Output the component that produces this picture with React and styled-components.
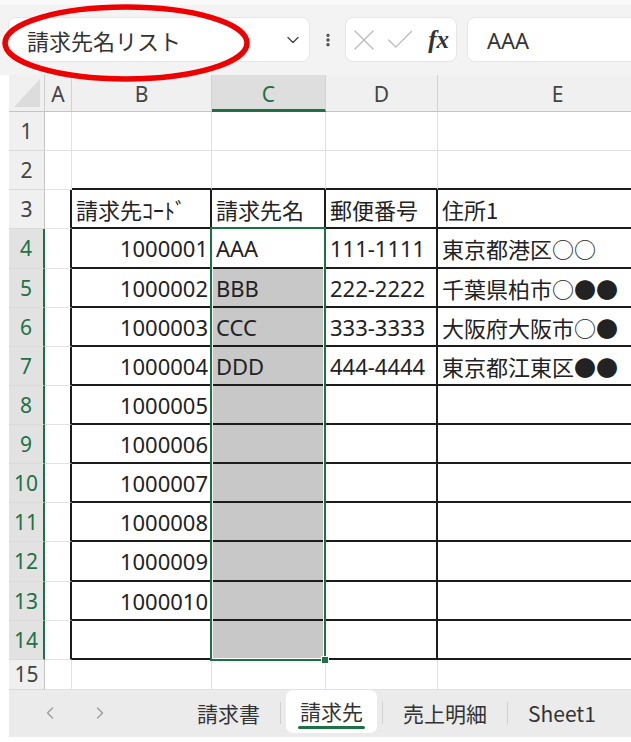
import styled, { createGlobalStyle } from "styled-components";
import {
  ChevronDown,
  EllipsisVertical,
  X,
  Check,
  ChevronLeft,
  ChevronRight,
} from "lucide-react";

const GlobalStyle = createGlobalStyle`
  html, body {
    margin: 0;
    padding: 0;
    background: #fff;
  }
  body {
    font-family: "Noto Sans", "Noto Sans CJK JP", sans-serif;
    overflow: hidden;
  }
`;

const GREEN = "#1e7145";

const Page = styled.div`
  position: relative;
  width: 631px;
  height: 742px;
  overflow: hidden;
`;

/* formula bar */
const Toolbar = styled.div`
  height: 75px;
  box-sizing: border-box;
  padding: 4px 0 0 8px;
  background: linear-gradient(#fafafa 0, #fafafa 5px, #f3f3f3 5px);
  display: flex;
  align-items: center;
  overflow: hidden;
`;

const NameBox = styled.div`
  flex: 0 0 302px;
  height: 45px;
  box-sizing: border-box;
  background: #fff;
  border: 1px solid #e6e6e6;
  border-radius: 8px;
  display: flex;
  align-items: center;
  justify-content: space-between;
  padding: 0 6px 0 18px;
  font-family: "Noto Sans CJK JP", sans-serif;
  font-size: 22px;
  color: #333;
`;

const Dots = styled.div`
  flex: 0 0 35px;
  display: flex;
  justify-content: center;
  color: #444;
`;

const FxButtons = styled.div`
  flex: 0 0 112px;
  height: 45px;
  box-sizing: border-box;
  background: #fff;
  border: 1px solid #e6e6e6;
  border-radius: 8px;
  display: flex;
  align-items: center;
  padding: 0 7px 0 0;
  color: #b8b8b8;
  svg + svg {
    margin-left: 1px;
  }
`;

const FxLabel = styled.span`
  margin-left: auto;
  font-family: "Liberation Serif", serif;
  font-style: italic;
  font-weight: bold;
  font-size: 25px;
  color: #333;
`;

const FormulaInput = styled.div`
  flex: 0 0 200px;
  height: 45px;
  margin-left: 10px;
  box-sizing: border-box;
  background: #fff;
  border: 1px solid #e6e6e6;
  border-radius: 8px;
  display: flex;
  align-items: center;
  padding-left: 19px;
  font-size: 22px;
  color: #333;
`;

/* sheet grid */
const Grid = styled.div`
  margin-left: 9px;
  display: grid;
  grid-template-columns: 36px 27px 140px 114px 112px 240px;
  grid-template-rows: 37px repeat(14, 39.14px) 30px;
  width: 622px;
  overflow: hidden;
`;

const Corner = styled.div`
  grid-row: 1;
  grid-column: 1;
  background: #f0f0f0;
  border-right: 1px solid #cfcfcf;
  border-bottom: 1px solid #c4c4c4;
  position: relative;
  &::after {
    content: "";
    position: absolute;
    right: 4px;
    bottom: 4px;
    width: 26px;
    height: 28px;
    background: #dcdcdc;
    clip-path: polygon(100% 0, 100% 100%, 0 100%);
  }
`;

const ColHead = styled.div`
  grid-row: 1;
  grid-column: ${(p) => p.$col};
  box-sizing: border-box;
  background: ${(p) => (p.$active ? "#dedede" : "#f0f0f0")};
  border-right: 1px solid #d2d2d2;
  border-bottom: ${(p) => (p.$active ? `3px solid ${GREEN}` : "1px solid #c4c4c4")};
  display: flex;
  align-items: center;
  justify-content: center;
  padding-top: ${(p) => (p.$active ? "4px" : "2px")};
  font-size: 21px;
  color: ${(p) => (p.$active ? GREEN : "#444")};
`;

const RowHead = styled.div`
  grid-row: ${(p) => p.$row};
  grid-column: 1;
  box-sizing: border-box;
  background: ${(p) => (p.$active ? "#e2e2e2" : "#f0f0f0")};
  border-right: ${(p) => (p.$active ? `2px solid ${GREEN}` : "1px solid #c4c4c4")};
  border-bottom: 1px solid #dadada;
  display: flex;
  align-items: center;
  justify-content: center;
  font-size: 21px;
  color: ${(p) => (p.$active ? GREEN : "#444")};
`;

const Cell = styled.div`
  grid-row: ${(p) => p.$row};
  grid-column: ${(p) => p.$col};
  box-sizing: border-box;
  display: flex;
  align-items: center;
  justify-content: ${(p) => (p.$right ? "flex-end" : "flex-start")};
  padding: ${(p) => (p.$right ? "1px 2px 0 0" : "1px 0 0 4px")};
  background: ${(p) => (p.$shade ? "#c8c8c8" : "#fff")};
  border-right: ${(p) => (p.$darkR ? "2px solid #1c1c1c" : "1px solid #e1e1e1")};
  border-bottom: ${(p) => (p.$darkB ? "2px solid #1c1c1c" : "1px solid #e1e1e1")};
  font-family: ${(p) =>
    p.$jp
      ? `"Noto Sans CJK JP", sans-serif`
      : `"Noto Sans", "Noto Sans CJK JP", sans-serif`};
  font-size: 22px;
  color: #222;
  white-space: nowrap;
  overflow: hidden;
`;

const Selection = styled.div`
  grid-column: 4 / 5;
  grid-row: 5 / 16;
  position: relative;
  margin: -2px 0 -1px -2px;
  border: 2px solid ${GREEN};
  box-shadow: inset 0 0 0 1px #fff;
  pointer-events: none;
  &::after {
    content: "";
    position: absolute;
    right: -5px;
    bottom: -5px;
    width: 6px;
    height: 6px;
    background: ${GREEN};
    border: 1px solid #fff;
  }
`;

/* sheet tabs */
const TabBar = styled.div`
  margin-left: 9px;
  height: 47px;
  background: #ebebeb;
  display: flex;
  align-items: center;
  font-family: "Noto Sans CJK JP", sans-serif;
  font-size: 21px;
  color: #333;
`;

const Arrows = styled.div`
  flex: 0 0 168px;
  display: flex;
  align-items: center;
  gap: 30px;
  padding-left: 31px;
  box-sizing: border-box;
  color: #9a9a9a;
`;

const Tab = styled.div`
  position: relative;
  flex: 0 0 auto;
  align-self: ${(p) => (p.$active ? "flex-start" : "center")};
  height: ${(p) => (p.$active ? "43px" : "auto")};
  display: flex;
  align-items: center;
  padding: 0 ${(p) => (p.$active ? "14px" : "20px")};
  margin: 0 ${(p) => (p.$active ? "5px" : "0")};
  background: ${(p) => (p.$active ? "#fff" : "transparent")};
  border-radius: 7px;
  &::after {
    content: "";
    display: ${(p) => (p.$active ? "block" : "none")};
    position: absolute;
    left: 12px;
    right: 12px;
    bottom: 4px;
    height: 3px;
    border-radius: 2px;
    background: ${GREEN};
  }
`;

const Sep = styled.div`
  flex: 0 0 1px;
  height: 22px;
  background: #d0d0d0;
`;

const Annotation = styled.svg`
  position: absolute;
  left: 0;
  top: 0;
  pointer-events: none;
`;

const columns = ["A", "B", "C", "D", "E"];

const data = {
  3: ["", "請求先ｺｰﾄﾞ", "請求先名", "郵便番号", "住所1"],
  4: ["", "1000001", "AAA", "111-1111", "東京都港区○○"],
  5: ["", "1000002", "BBB", "222-2222", "千葉県柏市○●●"],
  6: ["", "1000003", "CCC", "333-3333", "大阪府大阪市○●"],
  7: ["", "1000004", "DDD", "444-4444", "東京都江東区●●"],
  8: ["", "1000005"],
  9: ["", "1000006"],
  10: ["", "1000007"],
  11: ["", "1000008"],
  12: ["", "1000009"],
  13: ["", "1000010"],
};

const inTable = (r, c) => r >= 3 && r <= 14 && c >= 1 && c <= 4;

const Sheet = () => {
  const rows = [];
  for (let r = 1; r <= 15; r++) {
    const selRow = r >= 4 && r <= 14;
    rows.push(
      <RowHead key={`h${r}`} $row={r + 1} $active={selRow}>
        {r}
      </RowHead>
    );
    columns.forEach((_, c) => {
      const text = (data[r] && data[r][c]) || "";
      rows.push(
        <Cell
          key={`${r}-${c}`}
          $row={r + 1}
          $col={c + 2}
          $jp={c === 4}
          $right={c === 1 && r >= 4}
          $shade={c === 2 && r >= 5 && r <= 14}
          $darkR={inTable(r, c) || inTable(r, c + 1)}
          $darkB={inTable(r, c) || inTable(r + 1, c)}
        >
          {text}
        </Cell>
      );
    });
  }

  return (
    <Grid>
      <Corner />
      {columns.map((col, i) => (
        <ColHead key={col} $col={i + 2} $active={col === "C"}>
          {col}
        </ColHead>
      ))}
      {rows}
      <Selection />
    </Grid>
  );
};

export default function App() {
  return (
    <Page>
      <GlobalStyle />
      <Toolbar>
        <NameBox>
          <span>請求先名リスト</span>
          <ChevronDown size={20} color="#444" strokeWidth={1.6} />
        </NameBox>
        <Dots>
          <EllipsisVertical size={16} strokeWidth={3} />
        </Dots>
        <FxButtons>
          <X size={36} strokeWidth={0.8} />
          <Check size={34} strokeWidth={0.85} />
          <FxLabel>fx</FxLabel>
        </FxButtons>
        <FormulaInput>AAA</FormulaInput>
      </Toolbar>

      <Sheet />

      <TabBar>
        <Arrows>
          <ChevronLeft size={20} strokeWidth={1.5} />
          <ChevronRight size={20} strokeWidth={1.5} />
        </Arrows>
        <Tab>請求書</Tab>
        <Sep />
        <Tab $active>請求先</Tab>
        <Sep />
        <Tab>売上明細</Tab>
        <Sep />
        <Tab>Sheet1</Tab>
      </TabBar>

      <Annotation width="260" height="90" viewBox="0 0 260 90">
        <ellipse
          cx="126"
          cy="43"
          rx="121"
          ry="36"
          fill="none"
          stroke="#ee0000"
          strokeWidth="5.5"
        />
      </Annotation>
    </Page>
  );
}
